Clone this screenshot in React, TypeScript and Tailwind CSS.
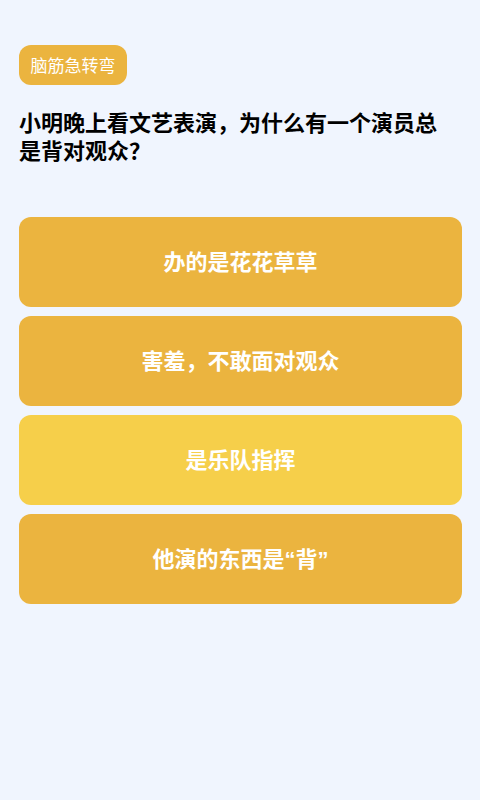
import React from "react";

const options = [
  { text: "办的是花花草草", bg: "bg-[#ebb43f]" },
  { text: "害羞，不敢面对观众", bg: "bg-[#ebb43f]" },
  { text: "是乐队指挥", bg: "bg-[#f6cf4a]" },
  { text: "他演的东西是“背”", bg: "bg-[#ebb43f]" },
];

export default function App() {
  return (
    <div
      className="w-[480px] h-[800px] bg-[#f0f5fe] pl-[19px] pr-[18px] pt-[45px] flex flex-col"
      style={{ fontFamily: '"Noto Sans CJK SC", "Noto Sans", sans-serif' }}
    >
      <div className="self-start h-[40px] w-[108px] rounded-[12px] bg-[#ebb43f] text-white text-[17px] flex items-center justify-center">
        脑筋急转弯
      </div>
      <div className="mt-[22px] pr-[8px] text-[22px] leading-[28px] font-bold text-black">
        小明晚上看文艺表演，为什么有一个演员总是背对观众？
      </div>
      <div className="mt-[54px] flex flex-col gap-[9px]">
        {options.map((o) => (
          <div
            key={o.text}
            className={`${o.bg} h-[90px] rounded-[12px] flex items-center justify-center text-white text-[22px] font-bold`}
            style={{ fontFamily: '"Liberation Sans", "Noto Sans CJK SC", sans-serif' }}
          >
            {o.text}
          </div>
        ))}
      </div>
    </div>
  );
}
